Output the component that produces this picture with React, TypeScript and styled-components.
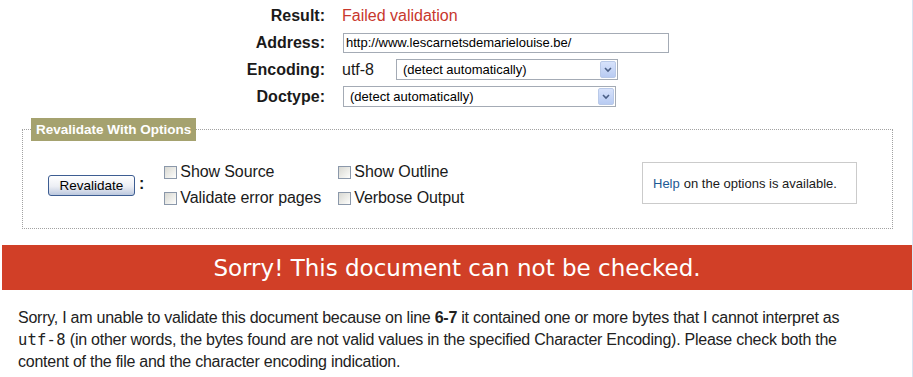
import styled, { createGlobalStyle } from "styled-components";

const GlobalStyle = createGlobalStyle`
  html, body {
    margin: 0;
    padding: 0;
    background: #ffffff;
  }
  body {
    font-family: "Liberation Sans", Arial, sans-serif;
    color: #1a1a1a;
  }
`;

const Page = styled.div`
  width: 912px;
  min-height: 377px;
  border-right: 1px solid #d9e4f1;
  overflow: hidden;
`;

const FormGrid = styled.div`
  display: grid;
  grid-template-columns: 325px 1fr;
  grid-auto-rows: 27px;
  column-gap: 17px;
  align-items: center;
  margin-top: 2px;
`;

const Label = styled.label`
  text-align: right;
  font-weight: bold;
  font-size: 16px;
  color: #1a1a1a;
`;

const Value = styled.div<{ $error?: boolean }>`
  display: flex;
  align-items: center;
  font-size: 16px;
  color: ${(p) => (p.$error ? "#c8372d" : "#1a1a1a")};
`;

const TextInput = styled.input`
  width: 326px;
  height: 20px;
  box-sizing: border-box;
  border: 1px solid #a4abb5;
  padding: 0 2px;
  font: 13px "Liberation Sans", Arial, sans-serif;
  color: #000;
  background: #fff;
  margin-left: 1px;
`;

const SelectWrap = styled.div<{ $width: number; $offset?: number }>`
  position: relative;
  width: ${(p) => p.$width}px;
  margin-left: ${(p) => p.$offset ?? 1}px;
`;

const Select = styled.select`
  appearance: none;
  width: 100%;
  height: 21px;
  box-sizing: border-box;
  border: 1px solid #a4abb5;
  background: #fff;
  padding: 0 0 0 6px;
  font: 13px "Liberation Sans", Arial, sans-serif;
  color: #000;
  outline: none;
`;

const SelectArrow = styled.span`
  position: absolute;
  right: 2px;
  top: 2px;
  width: 16px;
  height: 17px;
  box-sizing: border-box;
  border: 1px solid #b9c9e8;
  border-radius: 2px;
  background: linear-gradient(#d7e2fb, #b8cbf2);
  display: flex;
  align-items: center;
  justify-content: center;
  pointer-events: none;
`;

const Options = styled.fieldset`
  margin: 8px 0 0 22px;
  width: 871px;
  box-sizing: border-box;
  border: 1px dotted #a2a2a2;
  padding: 0;
`;

const Legend = styled.legend`
  margin-left: 8px;
  padding: 0 5px;
  background: #a5a26f;
  color: #fff;
  font-weight: bold;
  font-size: 13.5px;
  line-height: 23px;
`;

const OptionsRow = styled.div`
  display: flex;
  align-items: center;
  padding: 18px 35px 17px 25px;
`;

const Button = styled.button`
  width: 87px;
  height: 21px;
  border: 1px solid #3d5d92;
  border-radius: 3px;
  background: linear-gradient(#ffffff, #eceef4 55%, #bcc8de);
  font: 13.5px "Liberation Sans", Arial, sans-serif;
  color: #000;
  padding: 0;
`;

const Colon = styled.span`
  font-weight: bold;
  font-size: 16px;
  margin: 0 20px 2px 4px;
`;

const CheckGrid = styled.div`
  display: grid;
  grid-template-columns: 174px auto;
  grid-auto-rows: 26px;
  align-items: center;
`;

const Check = styled.label`
  display: flex;
  align-items: center;
  gap: 3px;
  font-size: 16px;
  letter-spacing: -0.1px;
  color: #1a1a1a;
`;

const Box = styled.input`
  appearance: none;
  margin: 0;
  width: 13px;
  height: 13px;
  border: 1px solid #8b98aa;
  background: linear-gradient(135deg, #d8d8d2, #f6f6f3 80%, #fff);
`;

const HelpBox = styled.div`
  margin: 0 0 4px auto;
  width: 215px;
  height: 42px;
  box-sizing: border-box;
  border: 1px solid #cbcbcb;
  display: flex;
  align-items: center;
  padding-left: 10px;
  font-size: 13px;
  color: #1a1a1a;
`;

const HelpLink = styled.a`
  color: #1d5a94;
  text-decoration: none;
  margin-right: 4px;
`;

const Banner = styled.h2`
  margin: 16px 0 0 2px;
  height: 45px;
  background: #d13f27;
  color: #fff;
  font: normal 23px "DejaVu Sans", sans-serif;
  line-height: 46px;
  text-align: center;
`;

const Message = styled.p`
  margin: 17px 0 0;
  padding: 0 40px 0 18px;
  font-size: 16px;
  letter-spacing: -0.25px;
  line-height: 22px;
  color: #222;
`;

const Code = styled.code`
  font: 15.5px "DejaVu Sans Mono", monospace;
  line-height: 1;
  letter-spacing: 0.2px;
`;

const Chevron = () => (
  <svg width="8" height="6" viewBox="0 0 8 6">
    <path d="M1 1l3 3 3-3" fill="none" stroke="#4b5f86" strokeWidth="1.6" />
  </svg>
);

const App = () => (
  <Page>
    <GlobalStyle />
    <FormGrid>
      <Label>Result:</Label>
      <Value $error>Failed validation</Value>
      <Label>Address:</Label>
      <Value>
        <TextInput defaultValue="http://www.lescarnetsdemarielouise.be/" />
      </Value>
      <Label>Encoding:</Label>
      <Value>
        utf-8
        <SelectWrap $width={222} $offset={22}>
          <Select defaultValue="auto">
            <option value="auto">(detect automatically)</option>
          </Select>
          <SelectArrow>
            <Chevron />
          </SelectArrow>
        </SelectWrap>
      </Value>
      <Label>Doctype:</Label>
      <Value>
        <SelectWrap $width={273}>
          <Select defaultValue="auto">
            <option value="auto">(detect automatically)</option>
          </Select>
          <SelectArrow>
            <Chevron />
          </SelectArrow>
        </SelectWrap>
      </Value>
    </FormGrid>

    <Options>
      <Legend>Revalidate With Options</Legend>
      <OptionsRow>
        <Button type="button">Revalidate</Button>
        <Colon>:</Colon>
        <CheckGrid>
          <Check>
            <Box type="checkbox" />
            Show Source
          </Check>
          <Check>
            <Box type="checkbox" />
            Show Outline
          </Check>
          <Check>
            <Box type="checkbox" />
            Validate error pages
          </Check>
          <Check>
            <Box type="checkbox" />
            Verbose Output
          </Check>
        </CheckGrid>
        <HelpBox>
          <HelpLink href="#">Help</HelpLink> on the options is available.
        </HelpBox>
      </OptionsRow>
    </Options>

    <Banner>Sorry! This document can not be checked.</Banner>
    <Message>
      Sorry, I am unable to validate this document because on line <b>6-7</b>{" "}
      it contained one or more bytes that I cannot interpret as{" "}
      <Code>utf-8</Code> (in other words, the bytes found are not valid values
      in the specified Character Encoding). Please check both the content of
      the file and the character encoding indication.
    </Message>
  </Page>
);

export default App;
